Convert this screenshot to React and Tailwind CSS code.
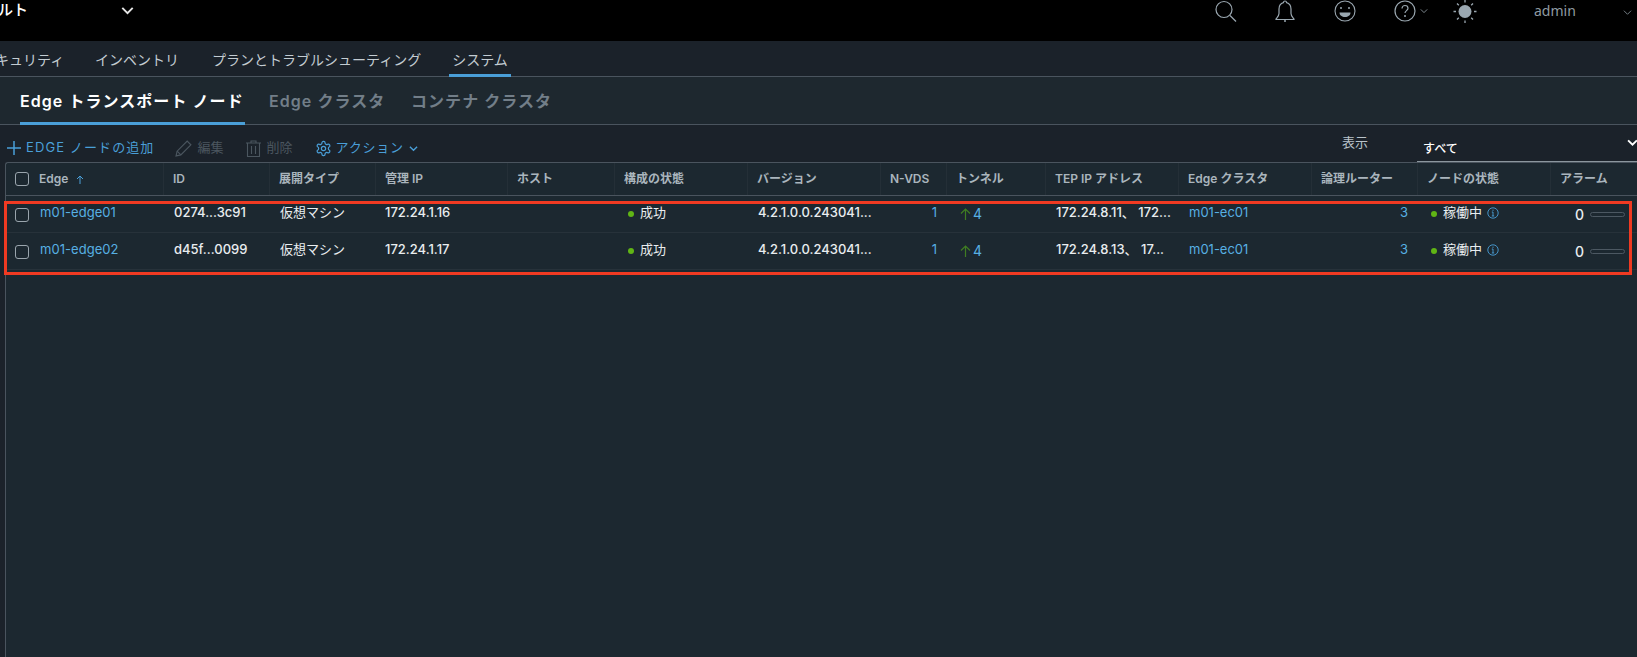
const FONT = "font-['Inter','Noto_Sans_CJK_JP',sans-serif]";
const COLS = "grid grid-cols-[158px_106px_106px_132px_107px_133px_133px_66px_99px_133px_133px_106px_133px_86px]";

const Check = ({ className = "" }) => (
  <span className={"block w-[14px] h-[14px] rounded-[3px] border border-[#9aa5ad] " + className} />
);

const Chevron = ({ className = "", size = 10, sw = 1.5 }) => (
  <svg width={size} height={size} viewBox="0 0 10 10" fill="none" stroke="currentColor" strokeWidth={sw} className={className}>
    <path d="M1 3l4 4 4-4" />
  </svg>
);

const Dot = () => <span className="block w-[6px] h-[6px] rounded-full bg-[#60b515]" />;

function TopIcons() {
  return (
    <div className="flex items-start text-[#9aa7b0]">
      <svg width="24" height="24" viewBox="0 0 24 24" fill="none" stroke="currentColor" strokeWidth="1.2" className="absolute left-[1214px] top-0">
        <circle cx="10" cy="9.5" r="8" />
        <path d="M16 15.5l6 6" />
      </svg>
      <svg width="22" height="24" viewBox="0 0 22 24" fill="none" stroke="currentColor" strokeWidth="1.2" className="absolute left-[1274px] top-0">
        <path d="M11 1c-1 0-1.5.6-1.6 1.6C6.5 3.4 5 6 5 9v4.5c0 2.5-2 4-3 5.500v.5h18V19c-1-1.500-3-3-3-5.500V9c0-3-1.500-5.600-4.400-6.400C12.500 1.600 12 1 11 1z" />
        <circle cx="11" cy="21" r="1" fill="currentColor" stroke="none" />
      </svg>
      <svg width="24" height="24" viewBox="0 0 24 24" fill="none" stroke="currentColor" strokeWidth="1.1" className="absolute left-[1333px] top-0">
        <circle cx="12" cy="11" r="10" />
        <circle cx="8" cy="8" r="1" fill="currentColor" stroke="none" />
        <circle cx="16" cy="8" r="1" fill="currentColor" stroke="none" />
        <path d="M6.500 12.500h11c0 2.800-2.500 4.500-5.500 4.500s-5.500-1.700-5.500-4.500z" fill="currentColor" stroke="none" />
      </svg>
      <svg width="24" height="24" viewBox="0 0 24 24" fill="none" stroke="currentColor" strokeWidth="1.200" className="absolute left-[1393px] top-0">
        <circle cx="12" cy="11" r="10" />
        <path d="M9 8.500c0-1.800 1.300-3 3-3s3 1.200 3 2.800c0 2.200-3 2.400-3 4.700" />
        <circle cx="12" cy="16" r="1" fill="currentColor" stroke="none" />
      </svg>
      <Chevron size={8} sw={1} className="absolute left-[1420px] top-[7px]" />
      <svg width="24" height="24" viewBox="0 0 24 24" fill="currentColor" stroke="currentColor" className="absolute left-[1453px] top-0">
        <circle cx="12" cy="11.500" r="6.500" stroke="none" />
        <path strokeWidth="1.300" d="M12 0v2.500M12 20.500V23M.5 11.500H3M21 11.500h2.500M4 3.500l1.800 1.800M18.200 17.700L20 19.500M20 3.500l-1.800 1.800M5.800 17.700L4 19.500" />
      </svg>
    </div>
  );
}

const Pencil = () => (
  <svg width="18" height="18" viewBox="0 0 17 17" fill="none" stroke="#4b565f" strokeWidth="1.100">
    <path d="M1 16l1-4.500L11.500 2l3.500 3.500L5.500 15z" />
    <path d="M2 11.500L5.500 15" />
  </svg>
);
const Trash = () => (
  <svg width="15" height="17" viewBox="0 0 15 17" fill="none" stroke="#4b565f" strokeWidth="1.100">
    <path d="M0 3h15M5 3V1h5v2M1.500 3v13.500h12V3M5.500 6v8M9.500 6v8" />
  </svg>
);
const Gear = () => (
  <svg width="17" height="17" viewBox="0 0 24 24" fill="none" stroke="#4a9fd8" strokeWidth="1.700" strokeLinecap="round" strokeLinejoin="round">
    <path d="M12.220 2h-.44a2 2 0 0 0-2 2v.18a2 2 0 0 1-1 1.730l-.43.25a2 2 0 0 1-2 0l-.15-.08a2 2 0 0 0-2.730.73l-.22.38a2 2 0 0 0 .73 2.730l.15.1a2 2 0 0 1 1 1.720v.51a2 2 0 0 1-1 1.740l-.15.09a2 2 0 0 0-.73 2.730l.22.38a2 2 0 0 0 2.730.73l.15-.08a2 2 0 0 1 2 0l.43.25a2 2 0 0 1 1 1.730V20a2 2 0 0 0 2 2h.44a2 2 0 0 0 2-2v-.18a2 2 0 0 1 1-1.730l.43-.25a2 2 0 0 1 2 0l.15.08a2 2 0 0 0 2.730-.73l.22-.39a2 2 0 0 0-.73-2.730l-.15-.08a2 2 0 0 1-1-1.740v-.5a2 2 0 0 1 1-1.740l.15-.09a2 2 0 0 0 .73-2.730l-.22-.38a2 2 0 0 0-2.730-.73l-.15.08a2 2 0 0 1-2 0l-.43-.25a2 2 0 0 1-1-1.730V4a2 2 0 0 0-2-2z" />
    <circle cx="12" cy="12" r="3" />
  </svg>
);
const Info = () => (
  <svg width="12" height="12" viewBox="0 0 12 12" fill="none" stroke="#4a9fd8" strokeWidth="0.900">
    <circle cx="6" cy="6" r="5.200" />
    <path d="M6 5v4M4.800 9h2.400M4.800 5H6" />
    <circle cx="6" cy="3.200" r="0.600" fill="#4a9fd8" stroke="none" />
  </svg>
);

const HEAD = ["", "ID", "展開タイプ", "管理 IP", "ホスト", "構成の状態", "バージョン", "N-VDS", "トンネル", "TEP IP アドレス", "Edge クラスタ", "論理ルーター", "ノードの状態", "アラーム"];

function Row({ name, id, ip, tep }) {
  const cell = "flex items-center min-w-0 whitespace-nowrap pb-[2px]";
  const link = "text-[#57b0e3]";
  return (
    <div className={COLS + " h-[37px] border-b border-[#27323a] text-[13px] font-medium text-[#e9edef]"}>
      <div className={cell + " pl-[9px]"}>
        <Check className="mt-[3px]" />
        <span className={link + " ml-[11px] tracking-[0.05px] font-normal"}>{name}</span>
      </div>
      <div className={cell + " pl-[10px]"}>{id}</div>
      <div className={cell + " pl-[10px] font-normal"}>仮想マシン</div>
      <div className={cell + " pl-[9px]"}>{ip}</div>
      <div className={cell} />
      <div className={cell + " pl-[13px]"}>
        <span className="mt-[2px]"><Dot /></span>
        <span className="ml-[6px] font-normal">成功</span>
      </div>
      <div className={cell + " pl-[10px]"}>4.2.1.0.0.243041...</div>
      <div className={cell + " justify-end pr-[10px] font-normal " + link}>1</div>
      <div className={cell + " pl-[13px] " + link}>
        <svg width="11" height="12" viewBox="0 0 11 12" fill="none" stroke="#3f7d22" strokeWidth="1.200" className="mt-[1px]">
          <path d="M5.500 12V1M1 5.500l4.500-4.500 4.500 4.500" />
        </svg>
        <span className="ml-[2px] text-[14px] font-normal">4</span>
      </div>
      <div className={cell + " pl-[10px]"}>{tep}</div>
      <div className={cell + " pl-[10px] font-normal " + link}>m01-ec01</div>
      <div className={cell + " justify-end pr-[10px] font-normal " + link}>3</div>
      <div className={cell + " pl-[13px]"}>
        <span className="mt-[2px]"><Dot /></span>
        <span className="ml-[6px] font-normal">稼働中</span>
        <span className="ml-[5px]"><Info /></span>
      </div>
      <div className={cell + " pl-[24px]"}>
        <span className="mt-[3px] text-[14px]">0</span>
        <span className="block ml-[6px] w-[35px] h-[5px] rounded-full border border-[#4c5862] mt-[3px]" />
      </div>
    </div>
  );
}

export default function App() {
  return (
    <div className={"relative w-[1637px] h-[657px] overflow-hidden flex flex-col bg-[#1b222a] " + FONT}>
      {/* top bar */}
      <header className="relative h-[41px] shrink-0 bg-black text-white">
        <div className="flex items-center h-[20px] -ml-[47px] text-[15px] font-medium">
          <span>デフォルト</span>
          <Chevron size={13} sw={1.500} className="ml-[93px] text-[#e6e6e6]" />
        </div>
        <TopIcons />
        <span className="absolute left-[1534px] top-0 text-[14px] text-[#8f9aa2] font-['Noto_Sans',sans-serif]">admin</span>
        <Chevron size={9} sw={1} className="absolute left-[1623px] top-[8px] text-[#7d8890]" />
      </header>

      {/* primary tabs */}
      <nav className="h-[36px] shrink-0 flex items-stretch -ml-[19px] pt-[8px] border-b border-[#4a545e] text-[14px] text-[#c3ccd2]">
        <span className="w-[114px]">セキュリティ</span>
        <span className="w-[117px]">インベントリ</span>
        <span className="w-[237px] whitespace-nowrap">プランとトラブルシューティング</span>
        <span className="w-[62px] h-[28px] text-center border-b-[3px] border-[#4a9fd8]">システム</span>
      </nav>

      {/* secondary tabs */}
      <div className="h-[48px] shrink-0 flex items-stretch pl-[20px] bg-[#1e282f] border-b border-[#4a545e] text-[16px] font-semibold tracking-[1.05px]">
        <span className="w-[225px] h-[48px] pt-[12px] text-white border-b-[3px] border-[#4a9fd8] whitespace-nowrap">Edge トランスポート ノード</span>
        <span className="ml-[24px] pt-[12px] w-[142px] text-[#727e88] whitespace-nowrap">Edge クラスタ</span>
        <span className="pt-[12px] text-[#727e88] whitespace-nowrap">コンテナ クラスタ</span>
      </div>

      {/* toolbar */}
      <div className="relative h-[37px] shrink-0 flex items-center pl-[7px] pt-[9px] text-[13px] whitespace-nowrap">
        <svg width="14" height="14" viewBox="0 0 14 14" stroke="#4a9fd8" strokeWidth="1.500"><path d="M7 0v14M0 7h14" /></svg>
        <span className="ml-[5px] text-[#4a9fd8] tracking-[1.1px]">EDGE ノードの追加</span>
        <span className="ml-[21px]"><Pencil /></span>
        <span className="ml-[4px] text-[#4b565f]">編集</span>
        <span className="ml-[23px]"><Trash /></span>
        <span className="ml-[5px] text-[#4b565f]">削除</span>
        <span className="ml-[22px]"><Gear /></span>
        <span className="ml-[4px] text-[#4a9fd8] tracking-[0.8px]">アクション</span>
        <Chevron size={9} sw={1.500} className="ml-[5px] text-[#4a9fd8]" />
        <span className="absolute left-[1342px] top-[8px] text-[#b9c3ca]">表示</span>
        <div className="absolute left-[1417px] top-[8px] w-[220px] h-[29px] border-b border-[#8b969e] pl-[6px] pt-[7px] text-[12px] font-medium text-white">
          すべて
          <Chevron size={11} sw={1.700} className="absolute left-[210px] top-[4px] text-white" />
        </div>
      </div>

      {/* table */}
      <main className="flex-1 ml-[5px] border-l border-t border-[#4a545e] rounded-tl-[3px] bg-[#1c2830]">
        <div className={COLS + " h-[33px] border-b border-[#4a545e] text-[12px] font-semibold text-[#aab5bd] whitespace-nowrap"}>
          <div className="flex items-center pl-[9px] border-r border-[#242f37]">
            <Check />
            <span className="ml-[10px]">Edge</span>
            <svg width="8" height="9" viewBox="0 0 8 9" fill="none" stroke="#4a9fd8" strokeWidth="1" className="ml-[8px]">
              <path d="M4 9V1M1 4l3-3 3 3" />
            </svg>
          </div>
          {HEAD.slice(1).map((h, i) => (
            <div key={h} className={"flex items-center pl-[9px] " + (i < 12 ? "border-r border-[#242f37]" : "")}>{h}</div>
          ))}
        </div>
        <Row name="m01-edge01" id="0274...3c91" ip="172.24.1.16" tep="172.24.8.11、 172..." />
        <Row name="m01-edge02" id="d45f...0099" ip="172.24.1.17" tep="172.24.8.13、 17..." />
      </main>

      {/* annotation frame */}
      <div className="absolute left-[4px] top-[201px] w-[1628px] h-[74px] border-[3px] border-[#f03a22] pointer-events-none" />
    </div>
  );
}
